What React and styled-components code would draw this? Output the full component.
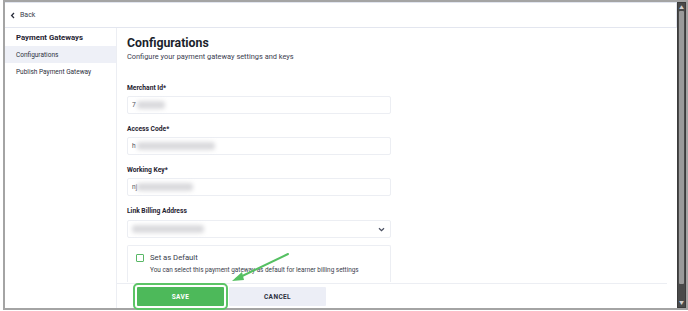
import React from "react";
import styled, { createGlobalStyle } from "styled-components";

const GlobalStyle = createGlobalStyle`
  html, body { margin: 0; padding: 0; background: #ffffff; }
  body { font-family: "Roboto", "Inter", "Noto Sans", sans-serif; color: #1f2331; }
  * { box-sizing: border-box; }
`;

// styled const
const Page = styled.div`
  position: relative;
  width: 688px;
  height: 311px;
  padding-left: 3px;
  overflow: hidden;
`;

const Window = styled.div`
  display: flex;
  width: 685px;
  height: 310px;
  border: 2px solid #a4a4a4;
  background: #ffffff;
`;

const Viewport = styled.div`
  flex: 1;
  display: flex;
  flex-direction: column;
  border-top: 1px solid #e1e5ef;
  min-width: 0;
`;

const Header = styled.div`
  height: 25px;
  flex-shrink: 0;
  display: flex;
  align-items: center;
  gap: 4px;
  padding-left: 5px;
  border-bottom: 1px solid #e3e6ef;
  border-right: 1px solid #e3e6ef;
  font-size: 7px;
  color: #3a3f4e;
`;

const Body = styled.div`
  flex: 1;
  display: flex;
  min-height: 0;
`;

const Sidebar = styled.nav`
  width: 112px;
  border-right: 1px solid #eceef3;
  padding-top: 4px;
`;

const SideTitle = styled.div`
  font-size: 7.8px;
  font-weight: 700;
  line-height: 12px;
  padding-left: 11px;
  margin-bottom: 2px;
  color: #1f2331;
`;

const NavItem = styled.div`
  height: 17px;
  display: flex;
  align-items: center;
  padding-left: 11px;
  font-size: 6.5px;
  color: #2c3040;
  background: ${(p) => (p.$active ? "#eef0f7" : "transparent")};
`;

const Main = styled.main`
  flex: 1;
  display: flex;
  flex-direction: column;
  min-width: 0;
`;

const Content = styled.div`
  flex: 1;
  padding: 7px 10px 0 10px;
`;

const Heading = styled.h1`
  margin: 0;
  font-size: 12.3px;
  line-height: 16px;
  font-weight: 700;
  color: #1b1f2c;
`;

const Subtitle = styled.p`
  margin: 0 0 20px;
  font-size: 7.4px;
  line-height: 12px;
  color: #3b4050;
`;

const Field = styled.div`
  width: 264px;
  margin-bottom: ${(p) => p.$mb ?? 10}px;
`;

const Label = styled.div`
  font-size: 6.7px;
  font-weight: 700;
  line-height: 10px;
  margin-bottom: ${(p) => p.$mb ?? 3}px;
  color: #1f2331;
`;

const Input = styled.div`
  height: 18px;
  border: 1px solid #eceef3;
  border-radius: 2px;
  display: flex;
  align-items: center;
  padding-left: 4px;
  font-size: 6.7px;
  color: #4a4e5c;
`;

const Select = styled(Input)`
  justify-content: space-between;
  padding-right: 5px;
`;

const Blur = styled.span`
  display: inline-block;
  width: ${(p) => p.$w}px;
  height: 8px;
  margin-left: ${(p) => p.$ml ?? 0}px;
  border-radius: 3px;
  background: #dadadd;
  filter: blur(2px);
`;

const DefaultBox = styled.div`
  width: 264px;
  height: 37px;
  border: 1px solid #eceef3;
  border-bottom: none;
  border-radius: 2px 2px 0 0;
  display: flex;
  gap: 6px;
  padding: 7px 0 0 8px;
`;

const Check = styled.span`
  width: 8px;
  height: 8px;
  margin-top: 1px;
  border: 1.5px solid #58b866;
  border-radius: 1px;
  flex-shrink: 0;
`;

const CheckText = styled.div`
  display: flex;
  flex-direction: column;
  gap: 2px;
  white-space: nowrap;
`;

const CheckTitle = styled.div`
  font-size: 7.7px;
  line-height: 10px;
  color: #3a3e4c;
`;

const CheckDesc = styled.div`
  font-size: 6.4px;
  line-height: 10px;
  color: #3a3e4c;
`;

const Footer = styled.div`
  flex-shrink: 0;
  margin-right: 10px;
  border-top: 1px solid #eceef3;
  padding: 3px 0 2px 20px;
  display: flex;
  gap: 5px;
`;

const Button = styled.button`
  width: ${(p) => p.$w}px;
  height: 19px;
  padding: 0;
  border: none;
  border-radius: 1px;
  font-family: inherit;
  font-size: 6.5px;
  font-weight: 700;
  letter-spacing: 0.4px;
  color: ${(p) => (p.$primary ? "#ffffff" : "#2b2f3d")};
  background: ${(p) => (p.$primary ? "#4db95a" : "#eceef6")};
  outline: ${(p) => (p.$primary ? "2px solid #5cc466" : "none")};
  outline-offset: 2px;
`;

const Scrollbar = styled.div`
  width: 9px;
  display: flex;
  flex-direction: column;
  background: #4a4a4a;
  border: 1px solid #3b3b3b;
`;

const ScrollArrow = styled.div`
  height: 8px;
  display: flex;
  align-items: center;
  justify-content: center;
  color: #cfcfcf;
  font-size: 5px;
  line-height: 1;
`;

const Thumb = styled.div`
  height: 273px;
  margin: 0 1px;
  background: #9a9a9a;
  border-radius: 1px;
`;

const Track = styled.div`
  flex: 1;
`;

const Arrow = styled.svg`
  position: absolute;
  left: 226px;
  top: 250px;
  pointer-events: none;
`;

const ChevronLeft = () => (
  <svg width="6" height="7" viewBox="0 0 6 7">
    <path d="M4 1 L1.6 3.5 L4 6" fill="none" stroke="#2b2f3d" strokeWidth="1.3" />
  </svg>
);

const ChevronDown = () => (
  <svg width="7" height="5" viewBox="0 0 7 5">
    <path d="M1 1.2 L3.5 3.6 L6 1.2" fill="none" stroke="#4a4f60" strokeWidth="1.3" />
  </svg>
);

const App = () => {
  return (
    <Page>
      <GlobalStyle />
      <Window>
        <Viewport>
          <Header>
            <ChevronLeft />
            <span>Back</span>
          </Header>
          <Body>
            <Sidebar>
              <SideTitle>Payment Gateways</SideTitle>
              <NavItem $active>Configurations</NavItem>
              <NavItem>Publish Payment Gateway</NavItem>
            </Sidebar>
            <Main>
              <Content>
                <Heading>Configurations</Heading>
                <Subtitle>Configure your payment gateway settings and keys</Subtitle>
                <Field>
                  <Label>Merchant Id*</Label>
                  <Input>
                    7<Blur $w={28} $ml={1} />
                  </Input>
                </Field>
                <Field>
                  <Label>Access Code*</Label>
                  <Input>
                    h<Blur $w={78} $ml={1} />
                  </Input>
                </Field>
                <Field>
                  <Label>Working Key*</Label>
                  <Input>
                    nj<Blur $w={56} />
                  </Input>
                </Field>
                <Field $mb={7}>
                  <Label $mb={4}>Link Billing Address</Label>
                  <Select>
                    <Blur $w={72} />
                    <ChevronDown />
                  </Select>
                </Field>
                <DefaultBox>
                  <Check />
                  <CheckText>
                    <CheckTitle>Set as Default</CheckTitle>
                    <CheckDesc>
                      You can select this payment gateway as default for learner billing settings
                    </CheckDesc>
                  </CheckText>
                </DefaultBox>
              </Content>
              <Footer>
                <Button $primary $w={87}>SAVE</Button>
                <Button $w={97}>CANCEL</Button>
              </Footer>
            </Main>
          </Body>
        </Viewport>
        <Scrollbar>
          <ScrollArrow>▲</ScrollArrow>
          <Thumb />
          <Track />
          <ScrollArrow>▼</ScrollArrow>
        </Scrollbar>
      </Window>
      <Arrow width="70" height="36" viewBox="0 0 70 36">
        <line x1="62" y1="4" x2="10" y2="29" stroke="#55c062" strokeWidth="2" strokeLinecap="round" />
        <path d="M6 31 L16 22 L18 30 Z" fill="#55c062" />
      </Arrow>
    </Page>
  );
};

export default App;
